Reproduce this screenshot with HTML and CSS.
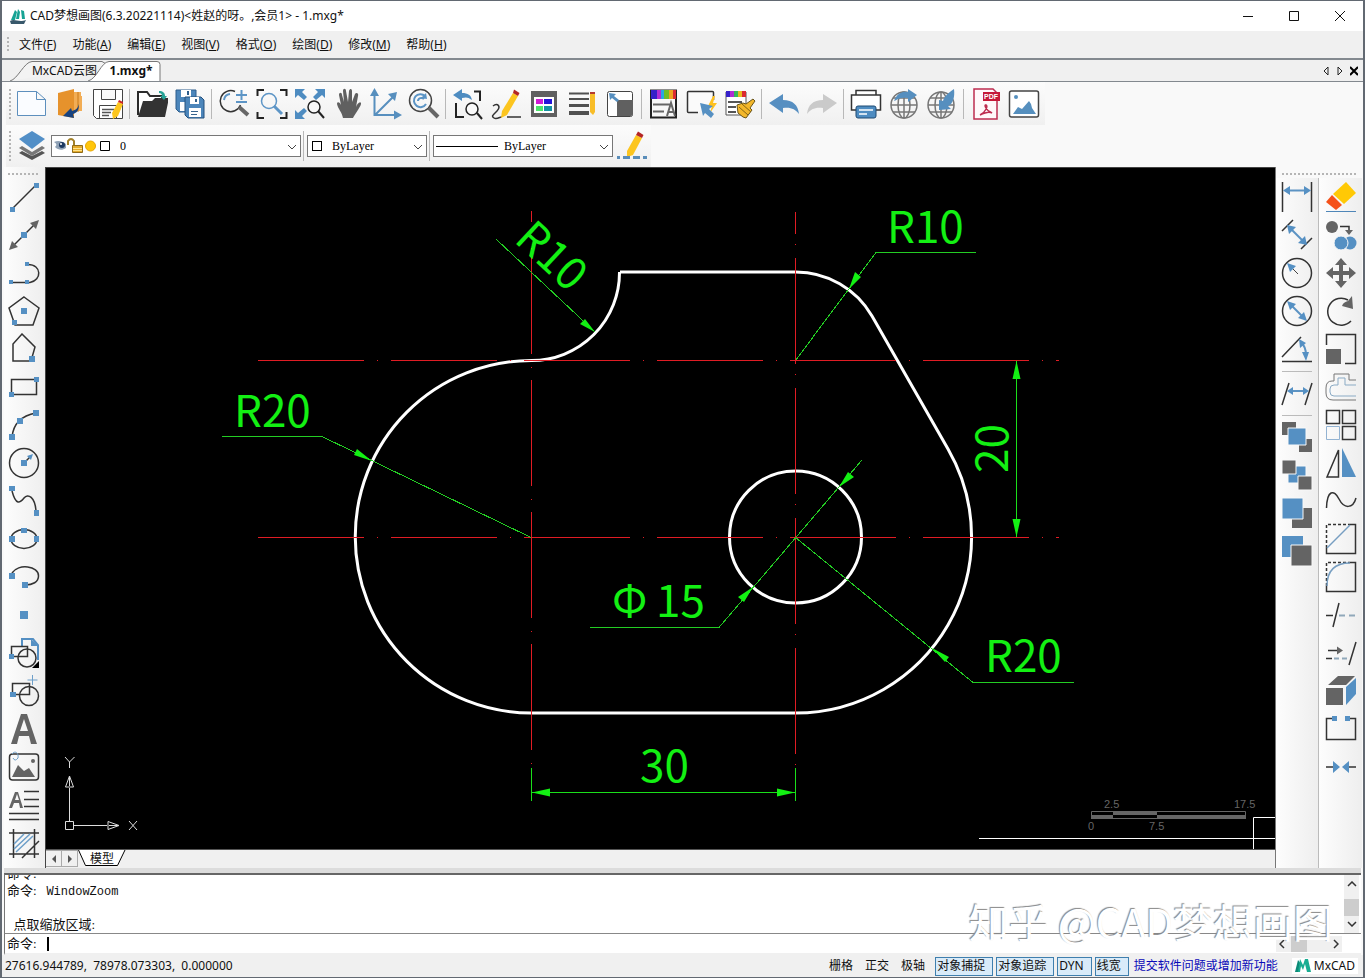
FILE: index.html
```html
<!DOCTYPE html>
<html lang="zh-CN">
<head>
<meta charset="utf-8">
<title>CAD梦想画图</title>
<link rel="stylesheet" href="styles.css">
</head>
<body>
<div class="window">
<header class="titlebar">
  <svg class="logo" viewBox="0 0 16 16"><path d="M5 2 1 12h4l2-8zM8 1 6 11h3l1-7zM11 2l1 9h3l-1-8z" fill="#16a394"/><path d="M0 13c5-3 8 2 16-1l-2 4H1z" fill="#38586b"/></svg>
  <h1>CAD梦想画图(6.3.20221114)&lt;姓赵的呀。,会员1&gt; - 1.mxg*</h1>
  <div class="winbtns">
    <button aria-label="最小化"><svg viewBox="0 0 12 12"><path d="M1 6.5h10"/></svg></button>
    <button aria-label="最大化"><svg viewBox="0 0 12 12"><path d="M1.5 1.5h9v9h-9z"/></svg></button>
    <button aria-label="关闭"><svg viewBox="0 0 12 12"><path d="m1 1 10 10M11 1 1 11"/></svg></button>
  </div>
</header>
<nav class="menubar">
  <i class="grip"></i>
  <button>文件(<u>F</u>)</button><button>功能(<u>A</u>)</button><button>编辑(<u>E</u>)</button><button>视图(<u>V</u>)</button><button>格式(<u>O</u>)</button><button>绘图(<u>D</u>)</button><button>修改(<u>M</u>)</button><button>帮助(<u>H</u>)</button>
</nav>
<div class="tabs">
  <button class="tab tab-cloud"><svg viewBox="0 0 98 20"><path d="M0 20C8 18 14 1 22 .5h70l5 3" fill="#f3f3f3" stroke="#777"/></svg><span>MxCAD云图</span></button>
  <button class="tab tab-file"><svg viewBox="0 0 74 20"><path d="M0 20C9 18 13 1 21 .5h48q3 0 3 3V20" fill="#fff" stroke="#777"/></svg><span>1.mxg*</span></button>
  <div class="tabnav">
    <button aria-label="上一个"><svg viewBox="0 0 8 10"><path d="M6 1v8L2 5z" fill="none" stroke="#222"/></svg></button>
    <button aria-label="下一个"><svg viewBox="0 0 8 10"><path d="M2 1v8l4-4z" fill="none" stroke="#222"/></svg></button>
    <button aria-label="关闭标签"><svg viewBox="0 0 8 10"><path d="m0 1 8 8M8 1 0 9" stroke="#000" stroke-width="2"/></svg></button>
  </div>
</div>

<div class="toolbar main-tools">
  <i class="grip"></i>
  <button aria-label="新建"><svg viewBox="0 0 32 32"><path d="M1.500 3.500h19l9 8v16h-28zM20.500 3.500v8h9" fill="#fafcff" stroke="#5d8fbd"/></svg></button>
  <button aria-label="打开图纸"><svg viewBox="0 0 32 32"><path d="M17 4h10v4h1v15h-8z" fill="#f2ad55"/><path d="M4 5 20 1v29L4 27z" fill="#e6922c"/><path d="M24 4v20" stroke="#c87818"/><path d="M25 16c-1 4-3 6-7 7l-1-3-8 8 11 2-1-4c4-1 6-4 6-10z" fill="#17427f"/></svg></button>
  <button aria-label="保存"><svg viewBox="0 0 32 32"><path d="M1.500 1.500h29v29h-26l-3-3zM9.500 1.500v10h14v-10M7.500 30V17.500h17V30" fill="#fff" stroke="#444"/><path d="M10 21.500h12M10 24.500h9M10 27.500h7" stroke="#555" stroke-width="1.500"/><path d="m26 14 5 2-5 12-5 3-1-6z" fill="#fdc61d"/><path d="m26 14 5 2v-2l-4-2z" fill="#c22"/></svg></button>
  <i class="sep"></i>
  <button aria-label="打开"><svg viewBox="0 0 32 32"><path d="M2 27V4h9l3 4h12v4" fill="#fff" stroke="#2b2b2b" stroke-width="2"/><path d="M7 13h9l3-3h14l-4 19H2z" fill="#333"/><path d="M23 3c4 0 6 2 6 5h2l-3 4-4-4h2c0-2-1-3-3-3z" fill="#25a396"/></svg></button>
  <button aria-label="全部保存"><svg viewBox="0 0 32 32"><path d="M2 2h20v22H5l-3-3z" fill="#4c86bb" stroke="#2c5d8c"/><path d="M7 2h10v7H7zM6 14h12v9H6z" fill="#fff"/><path d="M13 3h2v4h-2z" fill="#2c5d8c"/><path d="M11 9h16l3 3v18H14l-3-3z" fill="#4c86bb" stroke="#24507c"/><path d="M16 9h9v7h-9zM15 20h12v9H15z" fill="#fff"/><path d="M21 11h2v3h-2zM17 23h7v1h-7zM17 26h6v1h-6z" fill="#38648d"/></svg></button>
  <i class="sep"></i>
  <button aria-label="实时缩放"><svg viewBox="0 0 32 32" fill="none"><path d="M17 3.500A10.500 10.500 0 1 0 22.500 17" stroke="#333" stroke-width="1.500"/><path d="M6 12a7 7 0 0 1 6-6M18 7h11M23.500 2v10M18 14h11" stroke="#5d95c6" stroke-width="2"/><path d="m21 19 9 8" stroke="#666" stroke-width="4"/></svg></button>
  <button aria-label="窗口缩放"><svg viewBox="0 0 32 32" fill="none"><path d="M1.500 8V2H8M24 2h6.500v6M1.500 24v6H8M24 30h6.500v-6" stroke="#222" stroke-width="2"/><circle cx="13" cy="13" r="7.500" stroke="#5d95c6" stroke-width="1.500"/><path d="m18 18 8 8" stroke="#5d95c6" stroke-width="3"/></svg></button>
  <button aria-label="范围缩放"><svg viewBox="0 0 32 32"><g fill="#4e8cc1"><path d="M1 1h10L8 4l5 5-3 3-6-5-3 3zM31 1H21l3 3-5 5 3 3 6-5 3 3zM1 31h10l-3-3 5-5-3-3-6 5-3-3z"/></g><circle cx="20" cy="19" r="6" fill="#f8f8f8" stroke="#222" stroke-width="1.500"/><path d="m24 23 6 7" stroke="#222" stroke-width="2"/></svg></button>
  <button aria-label="平移"><svg viewBox="0 0 32 32"><path d="M11 30C10 24 6 21 5 16c0-3 3-2 4 1L7 7c0-3 3-3 3 0l2 7-1-11c0-3 3-3 3 0l2 11 1-11c1-3 3-2 3 0v11l3-8c1-2 4-1 3 2l-2 11c1-3 4-6 5-4s-6 11-8 15z" fill="#606060"/></svg></button>
  <button aria-label="坐标系"><svg viewBox="0 0 32 32"><path d="M4.500 5v22H27M5 27 24 8" fill="none" stroke="#578fbe" stroke-width="2"/><path d="M4.500 0 9 8H0zM32 27l-8-4.500v9zM27 4l-9 2 7 7z" fill="#578fbe"/></svg></button>
  <button aria-label="重生成"><svg viewBox="0 0 32 32" fill="none"><circle cx="12.500" cy="12.500" r="11" stroke="#444" stroke-width="1.500"/><path d="M17 8a6.500 6.500 0 1 0 1 8M10 13c0-3 4-4 6-2" stroke="#5b94c5" stroke-width="2"/><path d="m18 5 1 6-6-1z" fill="#5b94c5"/><path d="m21 20 9 9" stroke="#666" stroke-width="4"/></svg></button>
  <i class="sep"></i>
  <button aria-label="上一视图"><svg viewBox="0 0 32 32"><path d="m1 7 9-6v4c6 0 9 2 10 7-4-3-6-3-10-2v3z" fill="#4e8cc1"/><path d="M4 15v14h8M22 3.500h6V13" fill="none" stroke="#222" stroke-width="2"/><circle cx="20" cy="21" r="6" fill="#fafafa" stroke="#222" stroke-width="1.500"/><path d="m25 25 5 6" stroke="#222" stroke-width="2"/></svg></button>
  <button aria-label="绘图"><svg viewBox="0 0 32 32"><path d="M3 18c5-4 8 1 4 5s-6 5-3 7 7-2 8-1m5 0h14" fill="none" stroke="#333" stroke-width="1.500"/><path d="m23 5 5 3-11 19-6 3 1-7z" fill="#fcc51f"/><path d="m23 5 5 3 1.500-3-5.500-3.500z" fill="#b42525"/></svg></button>
  <button aria-label="特性"><svg viewBox="0 0 32 32"><path d="M3 3h26v26H3z" fill="#606060"/><path d="M6 9h20v16H6z" fill="#fff"/><path d="M8 11h7v5H8z" fill="#d01bd5"/><path d="M16 11h8v5h-8z" fill="#2414da"/><path d="M8 18h7v5H8z" fill="#4ce66b"/><path d="M16 18h8v5h-8z" fill="#1494a4"/></svg></button>
  <button aria-label="线宽"><svg viewBox="0 0 32 32"><path d="M3 5.500h20M3 11h20" fill="none" stroke="#505050" stroke-width="2"/><path d="M3 16h20v3H3zM3 23h20v4H3z" fill="#505050"/><path d="M24 6h5v18l-2 3-3-3z" fill="#f8bd28"/><path d="M24 4h5v2h-5z" fill="#b33a30"/></svg></button>
  <button aria-label="比例"><svg viewBox="0 0 32 32"><rect x="3.500" y="3.500" width="25" height="25" rx="2" fill="#fff" stroke="#444"/><path d="M13 12h16v14l-2 2H13z" fill="#606060"/><path d="m5 5 7 1-2 2 5 4-2 2-5-4-2 2z" fill="#568fc0"/></svg></button>
  <i class="sep"></i>
  <button aria-label="文字样式"><svg viewBox="0 0 32 32"><path d="M3 2.500h25v27H3z" fill="#f8f8f8" stroke="#222" stroke-width="2"/><path d="M3 2h6v9H3z" fill="#3620c9"/><path d="M9 2h4v9H9z" fill="#b22ed2"/><path d="M13 2h3v9h-3z" fill="#28a8df"/><path d="M16 2h5v9h-5z" fill="#6fbd25"/><path d="M21 2h4v9h-4z" fill="#eda21e"/><path d="M25 2h3v9h-3z" fill="#db2b31"/><path d="M5 16.500h18M5 23.500h11M19 28l4-13 4 13M20 24h6" fill="none" stroke="#666" stroke-width="2"/></svg></button>
  <button aria-label="快速选择"><svg viewBox="0 0 32 32"><path d="M12 24.500H2.500q-1 0-1-1v-19q0-1 1-1h24q1 0 1 1V12" fill="#fafafa" stroke="#333" stroke-width="1.500"/><path d="m27 8-5 10h4l-2 7 7-10h-4l2-7z" fill="#ffc11e"/><path d="m14 15 13 3-4 3 5 5-3 4-6-5-2 3z" fill="#5690c2"/></svg></button>
  <button aria-label="格式刷"><svg viewBox="0 0 32 32"><path d="M2 4h20v23H2z" fill="#fff" stroke="#555"/><path d="M2 3h4v6H2z" fill="#3620c9"/><path d="M6 3h4v6H6z" fill="#b22ed2"/><path d="M10 3h4v6h-4z" fill="#35b859"/><path d="M14 3h4v6h-4z" fill="#e8bd20"/><path d="M18 3h4v6h-4z" fill="#db2b31"/><path d="M4 14h14M4 19h8M4 24h8" stroke="#555" stroke-width="2"/><path d="m13 17 6-2 3 1 7-5 2 2-5 7 2 2-6 8-3-1-5-4z" fill="#f3b72b" stroke="#69551b"/><path d="m18 16 9 8M15 19l9 8" stroke="#856514"/></svg></button>
  <i class="sep"></i>
  <button aria-label="撤销"><svg viewBox="0 0 32 32"><path d="M1 15 15 6v6c10 0 15 5 16 14-4-5-8-7-16-6v5z" fill="#578fc1"/></svg></button>
  <button aria-label="重做"><svg viewBox="0 0 32 32"><path d="M31 15 17 6v6C7 12 2 17 1 26c4-5 8-7 16-6v5z" fill="#cacaca"/></svg></button>
  <i class="sep"></i>
  <button aria-label="打印"><svg viewBox="0 0 32 32"><path d="M6 7V2.500h20V7M6 22H1.500V7h29v15H26" fill="#fff" stroke="#333" stroke-width="1.500"/><rect x="6" y="18" width="20" height="12" rx="2" fill="#4e8cc1" stroke="#1f4a73"/><path d="M9 22h14M9 26h8" stroke="#fff" stroke-width="1.500"/></svg></button>
  <button aria-label="上传"><svg viewBox="0 0 32 32" fill="none"><g stroke="#777" stroke-width="1.500"><circle cx="16" cy="17" r="13"/><ellipse cx="16" cy="17" rx="6" ry="13"/><path d="M3 17h26M16 4v26M5 10h22M5 24h22"/></g><path d="M6 13C9 5 15 3 20 4V1l9 6-9 7v-4c-5-1-9 0-14 3z" fill="#568fbf"/></svg></button>
  <button aria-label="下载"><svg viewBox="0 0 32 32" fill="none"><g stroke="#777" stroke-width="1.500"><circle cx="15" cy="17" r="13"/><ellipse cx="15" cy="17" rx="6" ry="13"/><path d="M2 17h26M15 4v26M4 10h22M4 24h22"/></g><path d="M28 1C22 5 18 9 17 13l-4-1v10l12-1-3-3c5-2 7-9 6-17z" fill="#568fbf"/></svg></button>
  <i class="sep"></i>
  <button aria-label="导出 PDF"><svg viewBox="0 0 32 32"><path d="M4 1h19l4 4v26H4z" fill="#fff8fa" stroke="#bd2d50" stroke-width="1.500"/><path d="M13 4h17v9H13z" fill="#c51939"/><text x="14" y="11" class="pdf">PDF</text><path d="M10 27c6-3 8-9 6-10s-1 5 6 8c-3-2-8 0-12 2z" fill="none" stroke="#bd2d50" stroke-width="1.500"/></svg></button>
  <button aria-label="导出图片"><svg viewBox="0 0 32 32"><rect x="1.500" y="3" width="29" height="26" rx="2" fill="#fff" stroke="#444" stroke-width="1.500"/><path d="m5 26 5-7 4 2 7-8 2 3 1 4 4 6z" fill="#558fbe"/><circle cx="8" cy="9" r="2" fill="#558fbe"/></svg></button>
</div>

<div class="toolbar layer-tools">
  <i class="grip"></i>
  <button aria-label="图层"><svg viewBox="0 0 32 32"><path d="m3 23 13 7 13-7-3-2-10 5-10-5z" fill="#555"/><path d="m3 18 13 8 13-8-3-2-10 6-10-6z" fill="#777"/><path d="M16 1 29 9 16 19 3 9z" fill="#528fc7"/></svg></button>
  <div class="combo c-layer">
    <span class="combo-icons">
      <svg viewBox="0 0 60 16"><path d="M0 4c4-2 8-1 12 2v4c-4 3-8 2-11-1 2-2 2-3-1-5z" fill="#8fa1b5"/><circle cx="8" cy="7" r="3" fill="#1d3a62"/><circle cx="7" cy="6" r="1" fill="#fff"/><path d="M14 7V3q3-4 6 0v5" fill="none" stroke="#a38129" stroke-width="2"/><path d="M18.500 7.500h10v7h-10z" fill="#e5ac2c" stroke="#8f6b18"/><path d="M19 10.500h9M19 12.500h9" stroke="#ffe38b"/><circle cx="36.500" cy="8" r="5" fill="#ffc60b" stroke="#e8a600"/><path d="M46.500 3.500h9v9h-9z" fill="#fff" stroke="#000"/></svg>
    </span>
    <select aria-label="当前图层"><option>0</option></select>
    <svg class="chev" viewBox="0 0 10 6"><path d="m1 1 4 4 4-4"/></svg>
  </div>
  <i class="sep"></i>
  <div class="combo c-color">
    <span class="combo-icons"><b></b></span>
    <select aria-label="颜色"><option>ByLayer</option></select>
    <svg class="chev" viewBox="0 0 10 6"><path d="m1 1 4 4 4-4"/></svg>
  </div>
  <i class="sep"></i>
  <div class="combo c-line">
    <span class="combo-icons"><em></em></span>
    <select aria-label="线型"><option>ByLayer</option></select>
    <svg class="chev" viewBox="0 0 10 6"><path d="m1 1 4 4 4-4"/></svg>
  </div>
  <button aria-label="线型管理"><svg viewBox="0 0 32 32"><path d="m20 5 6 3-9 17-6 2 0-6z" fill="#fcc51f"/><path d="m20 5 6 3 1.500-3L22 1.500z" fill="#b42525"/><path d="M1 27.500h3m3 0h7m3 0h7m3 0h4" stroke="#5a8db9" stroke-width="3"/></svg></button>
</div>

<main class="workspace">
  <aside class="rail rail-left">
    <i class="grip-h"></i>
    <button aria-label="直线"><svg viewBox="0 0 32 32"><path d="M4 28 28 4" class="k"/><path d="M2 26h5v5H2zM26 2h5v5h-5z" class="b"/></svg></button>
    <button aria-label="构造线"><svg viewBox="0 0 32 32"><path d="M4 28 28 4" class="k"/><path d="m31 1-9 3 6 6zM1 31l9-3-6-6z" class="g"/><path d="M13 13h6v6h-6z" class="b"/></svg></button>
    <button aria-label="多段线"><svg viewBox="0 0 32 32"><path d="M3 25.500h19c12-2 12-18-2-18" class="k"/><path d="M1 23h4v4H1zM17 23h4v4h-4zM17 5h4v4h-4z" class="b"/></svg></button>
    <button aria-label="正多边形"><svg viewBox="0 0 32 32"><path d="m16 2 15 11-6 17H7L1 13z" class="k"/><path d="M13 13h6v6h-6zM4 25h5v5H4z" class="b"/></svg></button>
    <button aria-label="多边形"><svg viewBox="0 0 32 32"><path d="m14 1 13 13-4 14H5V11z" class="k"/><path d="M21 23h6v6h-6z" class="b"/></svg></button>
    <button aria-label="矩形"><svg viewBox="0 0 32 32"><path d="M3.500 8.500h25v15h-25z" class="k"/><path d="M26 6h5v5h-5zM1 21h5v5H1z" class="b"/></svg></button>
    <button aria-label="圆弧"><svg viewBox="0 0 32 32"><path d="M4 28Q6 8 28 4" class="k"/><path d="M1 25h6v6H1zM9 9h6v6H9zM25 1h6v6h-6z" class="b"/></svg></button>
    <button aria-label="圆"><svg viewBox="0 0 32 32"><circle cx="16" cy="16" r="14.500" class="k"/><path d="m16 16 7-7" class="k"/><path d="M13 13h6v6h-6zM25 7l-6 2 4 4z" class="b"/></svg></button>
    <button aria-label="样条曲线"><svg viewBox="0 0 32 32"><path d="M4 6C8 21 12 18 16 13s11-1 12 13" class="k"/><path d="M1 1h6v5H1zM26 25h5v6h-5z" class="b"/></svg></button>
    <button aria-label="椭圆"><svg viewBox="0 0 32 32"><ellipse cx="16" cy="16" rx="13" ry="9.500" class="k"/><path d="M1 13h6v6H1zM13 5h6v5h-6zM26 13h5v6h-5z" class="b"/></svg></button>
    <button aria-label="椭圆弧"><svg viewBox="0 0 32 32"><path d="M4 12C10 2 31 5 30.500 15c0 6-6 9-13 9" class="k"/><path d="M1 12h6v6H1zM14 21h6v6h-6z" class="b"/></svg></button>
    <button aria-label="点"><svg viewBox="0 0 32 32"><path d="M12 12h8v8h-8z" class="b"/></svg></button>
    <button aria-label="创建块"><svg viewBox="0 0 32 32"><path d="M14 10V2h11l5 6v15" fill="none" stroke="#548fc3" stroke-width="2"/><path d="M23 2v7h8z" class="b"/><path d="M3.500 9.500h16v10h-16z" class="k"/><circle cx="19" cy="21" r="9" class="k"/><path d="M1 17h5v5H1z" class="b"/><path d="M31 24v7h-7z"/></svg></button>
    <button aria-label="插入块"><svg viewBox="0 0 32 32"><path d="M4.500 8.500h17v11h-17z" class="k"/><circle cx="21" cy="21" r="9.500" class="k"/><path d="M2 17h6v5H2z" class="b"/><path d="M24.500 0v10m-5-5h10" stroke="#6d9fc9"/></svg></button>
    <button aria-label="单行文字"><svg viewBox="0 0 32 32"><path d="M3 31 13 1h6l10 30h-6l-2-8H11l-2 8zM12 18h8L16 6z" class="g"/></svg></button>
    <button aria-label="图像"><svg viewBox="0 0 32 32"><rect x="1.500" y="3" width="29" height="26" rx="3" class="k"/><path d="m4 26 6-12 6 6 5-3 6 9z" class="g"/><circle cx="25" cy="10" r="2" class="g"/><path d="M4 3c3-4 7-1 6 4q-3 4-5 0" fill="none" stroke="#6d9fc9"/></svg></button>
    <button aria-label="多行文字"><svg viewBox="0 0 32 32"><path d="m1 19 6-16h3l5 16h-3l-1-5H6l-2 5zM7 11h4L9 5z" class="g"/><path d="M16 2.500h15M16 10.500h15M16 17.500h15M1 24.500h30M1 30.500h30" class="k"/></svg></button>
    <button aria-label="填充"><svg viewBox="0 0 32 32"><path d="M1 6h30M1 27h30M5.500 2v29M26.500 2v29M14 31 31 14" class="k"/><path d="m6 17 10-10M6 22 22 7M8 25 25 9" fill="none" stroke="#6d9fc9" stroke-width="1.500"/></svg></button>
  </aside>

  <section class="document">
    <svg class="drawing" viewBox="46 168 1229 681" preserveAspectRatio="xMinYMin slice">
      <g fill="none" stroke="#fff" stroke-width="3">
        <path d="M620 272H795.500A88 88 0 0 1 872 316L948 449A176 176 0 0 1 795.500 713H531.500A176.250 176.250 0 0 1 531.500 360.500A88 88 0 0 0 619.500 272"/>
        <circle cx="795.500" cy="537" r="66"/>
      </g>
      <g fill="none" stroke="#e01c24" stroke-dasharray="106 13 1 13">
        <path d="M258 360.500H1059"/><path d="M258 537.500H1059"/>
        <path d="M531.500 211V768" stroke-dasharray="106 13 1 12" stroke-dashoffset="95"/>
        <path d="M795.500 212V768" stroke-dasharray="106 10 1 13" stroke-dashoffset="84"/>
      </g>
      <g fill="none" stroke="#23cc23">
        <path d="M222 436.500h100l209 101M496.500 239.500 595 332M795.500 360.500 876 252.500h100M862 460 719 627.500H590M795.500 537.500 973 682.500h101" shape-rendering="crispEdges"/>
        <path d="M1016.500 361V537M531 792.500h264M531.500 768v33M795.500 768v33" stroke="#1adf1a"/>
      </g>
      <g fill="#13f013">
        <path d="m372 461-18-6 3-6zM595 332l-15-8 5-5zM849 289l6-17 6 5zM839 487l9-15 6 5zM753 587l-9 15-6-5zM932 648l17 9-4 5zM1016.500 361l4 18h-8zM1016.500 537l4-18h-8zM532 792.500l18-4v8zM795 792.500l-18-4v8z"/>
      </g>
      <g class="dim">
        <text x="234" y="427">R20</text><text x="887" y="243">R10</text><text x="985" y="672">R20</text><text x="640" y="782">30</text>
        <text x="612" y="617">Φ</text><text x="656" y="617">15</text>
        <text transform="translate(1008 473) rotate(-90)">20</text>
        <text transform="translate(513 241) rotate(43)">R10</text>
      </g>
      <g fill="none" stroke="#ddd">
        <path d="M65.500 821.500h8v8h-8zM69.500 821v-33M74 825.500h33M69.500 776l-4 11h8zM119 825.500l-11-4v8zM109 825.500h9M69.500 786v-9M65 757l4.500 5 5-5M69.500 762v6M129 821l8 9M137 821l-8 9"/>
        <path d="M979 838.500h296M1253.500 849v-31.500H1275" stroke="#fff"/>
      </g>
      <path d="M1091.500 811.500h154v7h-154z" fill="#000" stroke="#666"/><path d="M1091 815h22v4h-22zM1113 811h44v4h-44zM1157 815h89v4h-89z" fill="#666"/>
      <g class="scale"><text x="1104" y="808">2.5</text><text x="1234" y="808">17.5</text><text x="1088" y="830">0</text><text x="1149" y="830">7.5</text></g>
    </svg>
    <div class="modelbar">
      <button aria-label="向左"><svg viewBox="0 0 8 10"><path d="M6 1v8L2 5z" fill="#555"/></svg></button>
      <button aria-label="向右"><svg viewBox="0 0 8 10"><path d="M2 1v8l4-4z" fill="#555"/></svg></button>
      <button class="model"><svg viewBox="0 0 48 17"><path d="m.500 0 7 15.500h32L47 0" fill="#fff" stroke="#000"/></svg><span>模型</span></button>
    </div>
  </section>

  <aside class="rights">
    <i class="grip-h"></i>
    <div class="rail rail-dim">
      <button aria-label="线性标注"><svg viewBox="0 0 32 32"><path d="M1.500 1v30M30.500 1v30" class="k"/><path d="M5 9.500h22" stroke="#5c93c3" stroke-width="2"/><path d="m2 9.500 7-4.500v9zM30 9.500 23 5v9z" class="b"/></svg></button>
      <button aria-label="对齐标注"><svg viewBox="0 0 32 32"><path d="M1 12 12 1M20 30l11-11" class="k"/><path d="m9 9 14 14" stroke="#5c93c3" stroke-width="2"/><path d="m6 6 9 2-7 7zM26 26l-2-9-7 7z" class="b"/></svg></button>
      <button aria-label="半径标注"><svg viewBox="0 0 32 32"><circle cx="16" cy="16" r="14.500" class="k"/><path d="m9 9 8 8" stroke="#444"/><path d="m6 6 9 3-6 6z" class="b"/></svg></button>
      <button aria-label="直径标注"><svg viewBox="0 0 32 32"><circle cx="16" cy="16" r="14.500" class="k"/><path d="m9 9 14 14" stroke="#5c93c3" stroke-width="2"/><path d="m6 6 9 3-6 6zM26 26l-3-9-6 6z" class="b"/></svg></button>
      <button aria-label="角度标注"><svg viewBox="0 0 32 32"><path d="M1 28.500h30M1 24 20 4" class="k"/><path d="M20 9q5 5 5 13" fill="none" stroke="#5c93c3" stroke-width="2"/><path d="m18 6 7 4-6 5zM25 28l-4-9h7z" class="b"/></svg></button>
      <i class="sep-h"></i>
      <button aria-label="编辑标注"><svg viewBox="0 0 32 32"><path d="M1 28 8 6M24 28l7-22" class="k"/><path d="M8 14h18" stroke="#5c93c3" stroke-width="2"/><path d="m6 14 6-4v8zM28 14l-6-4v8z" class="b"/></svg></button>
      <i class="sep-h"></i>
      <button aria-label="前置"><svg viewBox="0 0 32 32"><path d="M1 1h14v13H1zM18 18h13v13H18z" class="g"/><path d="M7 7h18v17H7z" class="bw"/></svg></button>
      <button aria-label="后置"><svg viewBox="0 0 32 32"><path d="M7 7h18v17H7z" class="bw"/><path d="M1 1h14v14H1zM17 17h14v14H17z" class="gw"/></svg></button>
      <button aria-label="置于最前"><svg viewBox="0 0 32 32"><path d="M11 11h20v20H11z" class="g"/><path d="M1 1h21v21H1z" class="bw"/></svg></button>
      <button aria-label="置于最后"><svg viewBox="0 0 32 32"><path d="M1 1h21v21H1z" class="b"/><path d="M10 10h21v21H10z" class="gw"/></svg></button>
    </div>
    <div class="rail rail-edit">
      <button aria-label="删除"><svg viewBox="0 0 32 32"><path d="m21 1 10 11-12 11L8 13z" fill="#ffc905"/><path d="m7 14 10 10-6 5-10-8z" fill="#f55119"/><path d="M1 30.500h30" stroke="#4f86b8"/></svg></button>
      <button aria-label="复制"><svg viewBox="0 0 32 32"><circle cx="7" cy="8" r="6" class="g"/><path d="M15 7.500h9V13" class="k"/><path d="M20 11h8l-4 5z" class="g"/><circle cx="25" cy="24" r="6.500" class="b"/><circle cx="16" cy="24" r="7" class="bw"/></svg></button>
      <button aria-label="移动"><svg viewBox="0 0 32 32"><path d="m16 1 6 7h-4v6h6v-4l7 6-7 6v-4h-6v6h4l-6 7-6-7h4v-6H8v4l-7-6 7-6v4h6V8h-4z" class="g"/></svg></button>
      <button aria-label="旋转"><svg viewBox="0 0 32 32"><path d="M23 5A13.500 13.500 0 1 0 26 26" class="k"/><path d="m27 1 1 13-11-3c1-3 3-4 6-5z" class="g"/></svg></button>
      <button aria-label="缩放"><svg viewBox="0 0 32 32"><path d="M1.500 12V1.500h29v29H20" class="k"/><path d="M1 16h15v15H1z" class="g"/></svg></button>
      <button aria-label="偏移"><svg viewBox="0 0 32 32"><g fill="none" stroke="#777"><path d="M31 9h-7V3H9v7H7q-6 0-6 7v5q0 7 7 7h23"/><path d="M31 14H20V7h-7v7H9q-4 0-4 4v3q0 4 4 4h22" stroke="#8babc5"/></g></svg></button>
      <button aria-label="阵列"><svg viewBox="0 0 32 32"><path d="M1.500 1.500h13v13h-13zM17.500 1.500h13v13h-13zM17.500 17.500h13v13h-13z" class="k"/><path d="M1.500 17.500h13v13h-13z" fill="none" stroke="#93b3d2"/></svg></button>
      <button aria-label="镜像"><svg viewBox="0 0 32 32"><path d="M13.500 3v27H2z" class="k"/><path d="m17 1 14 29H17z" class="b"/></svg></button>
      <button aria-label="编辑曲线"><svg viewBox="0 0 32 32"><path d="M1.500 23C2 5 9 4 14 14s14 10 17-1" class="k"/></svg></button>
      <button aria-label="倒角"><svg viewBox="0 0 32 32"><path d="M25 1.500h5.500v29h-29V25" class="k"/><path d="M1.500 25V1.500H25" class="k" stroke-dasharray="3 2"/><path d="M2 25 25 2" stroke="#779ec1" stroke-width="1.500"/></svg></button>
      <button aria-label="圆角"><svg viewBox="0 0 32 32"><path d="M25 1.500h5.500v29h-29V25" class="k"/><path d="M1.500 25V1.500H25" class="k" stroke-dasharray="3 2"/><path d="M2 25Q2 2 25 2" fill="none" stroke="#779ec1" stroke-width="1.500"/></svg></button>
      <button aria-label="修剪"><svg viewBox="0 0 32 32"><path d="m8 28 6-24M1 16.500h7" class="k"/><path d="M14 16.500h17" stroke="#90a8ba" stroke-width="2" stroke-dasharray="6 4"/></svg></button>
      <button aria-label="延伸"><svg viewBox="0 0 32 32"><path d="m24 28 7-23M1 21.500h6M3 13.500h10" class="k"/><path d="m18 13.500-6-4v8z" class="g"/><path d="M9 21.500h13" stroke="#90a8ba" stroke-width="2" stroke-dasharray="5 3"/></svg></button>
      <button aria-label="分解"><svg viewBox="0 0 32 32"><path d="M1 13h17v17H1zM3 10 13 1h17l-9 9z" class="g"/><path d="m21 12 10-9v16l-10 11z" class="b"/></svg></button>
      <button aria-label="打断"><svg viewBox="0 0 32 32"><path d="M8 5.500H1.500v21h29v-21H24" class="k"/><path d="M7 3h5v5H7zM20 3h5v5h-5z" class="b"/></svg></button>
      <button aria-label="合并"><svg viewBox="0 0 32 32"><path d="M1 16h8M23 16h8" class="k"/><path d="m15 16-7-6v12zM17 16l7-6v12z" class="b"/></svg></button>
    </div>
  </aside>
</main>

<section class="command">
  <div class="history">
    <div class="lines"><p>命令:</p><p>命令:&nbsp;&nbsp; <span class="code">WindowZoom</span></p><p></p><p>&nbsp; 点取缩放区域:</p></div>
    <div class="vscroll"><svg viewBox="0 0 10 6"><path d="m1 5 4-4 4 4"/></svg><i></i><svg viewBox="0 0 10 6"><path d="m1 1 4 4 4-4"/></svg></div>
  </div>
  <div class="prompt">
    <label for="cmd">命令:</label><i class="caret"></i><input id="cmd" type="text">
    <div class="hscroll"><svg viewBox="0 0 6 10"><path d="M5 1 1 5l4 4"/></svg><i></i><svg viewBox="0 0 6 10"><path d="m1 1 4 4-4 4"/></svg></div>
  </div>
  <div class="watermark">知乎 @CAD梦想画图</div>
</section>
<footer class="status">
  <output>27616.944789,&nbsp; 78978.073303,&nbsp; 0.000000</output>
  <button>栅格</button><button>正交</button><button>极轴</button>
  <div class="toggles"><button>对象捕捉</button><button>对象追踪</button><button>DYN</button><button>线宽</button></div>
  <a href="#feedback">提交软件问题或增加新功能</a>
  <div class="brand"><svg viewBox="0 0 16 16"><path d="M3 2 0 14h4l2-8z" fill="#0c8b78"/><path d="m5 1 3 6 2-6h3l3 13h-4L10 6 8 12 6 8l-1 6H3z" fill="#19ad92"/></svg><span>MxCAD</span></div>
</footer>
</div>
</body>
</html>
```
FILE: styles.css
```css
* { box-sizing: border-box; }
body { margin: 0; font: 12px/16px "Noto Sans", "Noto Sans CJK SC", sans-serif; color: #111; }
button { border: 0; padding: 0; margin: 0; background: none; font: inherit; color: inherit; display: flex; align-items: center; justify-content: center; flex: none; }
svg { display: block; flex: none; }
p, h1 { margin: 0; font: inherit; }
.window { height: 100vh; display: flex; flex-direction: column; border: solid #626972; border-width: 1px 2px 1px 2px; background: #f9f9f9; overflow: hidden; }
.menubar, .tabs, .status { background: #f0f0f0; }

.titlebar { height: 30px; flex: none; background: #fff; display: flex; align-items: center; padding-left: 8px; gap: 4px; }
.logo { width: 16px; height: 16px; }
.titlebar h1 { flex: 1; }
.winbtns { display: flex; }
.winbtns button { width: 46px; height: 28px; }
.winbtns svg { width: 12px; height: 12px; fill: none; stroke: #111; }

.menubar { height: 27px; flex: none; display: flex; align-items: center; gap: 16px; padding-left: 5px; }
.menubar .grip { height: 15px; margin-right: -6px; }
.grip { width: 2px; height: 30px; flex: none; background: repeating-linear-gradient(#b5b5b5 0 2px, transparent 2px 4px); }
.grip-h { height: 2px; flex: none; background: repeating-linear-gradient(90deg, #b5b5b5 0 2px, transparent 2px 4px); }

.tabs { height: 24px; flex: none; display: flex; align-items: flex-end; border-top: 2px solid #83898f; border-bottom: 1px solid #83898f; padding-left: 8px; }
.tab { position: relative; height: 20px; }
.tab svg { position: absolute; inset: 0; width: 100%; height: 100%; }
.tab span { position: relative; }
.tab-cloud { width: 98px; padding-left: 11px; }
.tab-file { width: 74px; margin-left: -20px; padding-left: 12px; font-weight: bold; }
.tabnav { display: flex; align-items: center; gap: 6px; margin-left: auto; padding-right: 5px; height: 20px; }
.tabnav svg { width: 8px; height: 10px; }

.toolbar { flex: none; display: flex; align-items: center; align-self: flex-start; margin-left: 4px; padding-left: 3px; background: linear-gradient(#fcfcfc, #f0f0f0); }
.main-tools { height: 43px; padding-right: 2px; }
.layer-tools { height: 42px; }
.toolbar button { width: 38px; height: 38px; }
.toolbar > .grip + button { margin-left: 2px; }
.toolbar button svg, .rail button svg { width: 32px; height: 32px; }
.sep { width: 1px; height: 30px; flex: none; background: #b8b8b8; margin: 0 3px 0 2px; }
.pdf { font: bold 7px "Liberation Sans", sans-serif; fill: #fff; }
.combo { position: relative; height: 22px; border: 1px solid #777; background: #fff; }
.combo select { appearance: none; width: 100%; height: 100%; border: 0; background: transparent; padding: 0 20px 0 24px; font: 12px "Liberation Serif", serif; color: #000; }
.c-layer { width: 250px; }
.c-layer select { padding-left: 68px; }
.c-color { width: 120px; }
.c-line { width: 180px; }
.c-line select { padding-left: 70px; }
.combo-icons { position: absolute; left: 2px; top: 2px; height: 16px; display: flex; align-items: center; pointer-events: none; }
.combo-icons svg { width: 60px; height: 16px; }
.combo-icons b { width: 10px; height: 10px; border: 1px solid #000; background: #fff; margin-left: 2px; }
.combo-icons em { width: 62px; height: 1px; background: #000; }
.combo .chev { position: absolute; right: 3px; top: 8px; width: 10px; height: 6px; fill: none; stroke: #444; }

.workspace { flex: 1; min-height: 0; display: flex; }
.rail { display: flex; flex-direction: column; align-items: center; background: linear-gradient(90deg, #fdfdfd, #eeeeee); }
.rail button { width: 38px; height: 38px; }
.rail-left { width: 41px; margin-left: 2px; padding: 6px 1px 0 0; }
.grip-h { align-self: stretch; margin: 0 6px 3px 4px; }
.k { fill: none; stroke: #333; stroke-width: 1.500; }
.b { fill: #5590c3; }
.g { fill: #646464; }
.bw { fill: #5590c3; stroke: #f8f8f8; }
.gw { fill: #646464; stroke: #f8f8f8; }
.document { flex: 1; min-width: 0; display: flex; flex-direction: column; background: #f0f0f0; border: solid #444; border-width: 1px 0 0 1px; }
.drawing { width: 100%; flex: 1; min-height: 0; background: #000; }
.dim { font: 44px "Noto Sans CJK SC", sans-serif; fill: #13f013; }
.scale { font: 11px "Liberation Sans", sans-serif; fill: #666; }
.modelbar { height: 19px; flex: none; display: flex; border-top: 1px solid #555; }
.modelbar button { width: 16px; height: 17px; border: 1px solid #aaa; border-left: 0; }
.modelbar svg { width: 8px; height: 10px; }
.modelbar .model { position: relative; width: 48px; border: 0; }
.modelbar .model svg { position: absolute; inset: 0; width: 48px; height: 17px; }
.model span { position: relative; }
.rights { flex: none; width: 88px; display: grid; grid-template-columns: 42px 44px; grid-template-rows: auto 1fr; padding: 6px 1px 0 0; border-left: 1px solid #777; }
.rights .grip-h { grid-column: 1 / 3; margin: 0 6px 3px 6px; }
.rail-edit { border-left: 1px solid #bbb; }
.sep-h { width: 30px; height: 1px; background: #bbb; margin: 3px 0 2px; flex: none; }

.command { flex: none; height: 87px; display: flex; flex-direction: column; position: relative; margin: 0 2px; border-top: 5px solid #dcdcdc; background: #fff; font: 13px/17px "Liberation Serif", "Noto Sans CJK SC", serif; }
.history { height: 61px; display: flex; border-top: 2px solid #666; border-bottom: 1px solid #888; border-left: 1px solid #777; overflow: hidden; }
.lines { flex: 1; padding-left: 2px; display: flex; flex-direction: column; justify-content: flex-end; min-height: 0; }
.lines p { height: 17px; flex: none; }
.code { font: 12px/16px "Liberation Mono", monospace; }
.vscroll { width: 15px; background: #f0f0f0; display: flex; flex-direction: column; align-items: center; padding: 6px 0; margin-right: 2px; }
.vscroll svg { width: 10px; height: 6px; fill: none; stroke: #333; stroke-width: 1.500; }
.vscroll i { width: 15px; height: 17px; background: #cdcdcd; margin: auto 0 5px; }
.prompt { flex: 1; display: flex; align-items: center; padding-left: 2px; border-left: 1px solid #777; border-bottom: 2px solid #f0f0f0; }
.caret { width: 2px; height: 14px; background: #000; margin-left: 10px; }
.prompt input { flex: 1; min-width: 0; border: 0; padding: 0; font: inherit; }
.hscroll { width: 66px; height: 16px; margin-right: 19px; background: #f0f0f0; display: flex; align-items: center; padding: 0 3px; }
.hscroll svg { width: 6px; height: 10px; fill: none; stroke: #333; stroke-width: 1.500; }
.hscroll i { width: 16px; height: 16px; background: #cdcdcd; margin: 0 auto 0 6px; }
.watermark { position: absolute; right: 28px; top: 24px; font: 40px/48px "Noto Sans CJK SC", sans-serif; color: #fff; text-shadow: -1px -1px 1px #888; pointer-events: none; }

.status { flex: none; height: 22px; display: flex; align-items: center; padding: 0 5px 0 3px; }
.status output { flex: 1; }
.status > button { margin-right: 12px; }
.status > button:nth-of-type(3) { margin-right: 10px; }
.toggles { display: flex; gap: 3px; margin-right: 5px; }
.toggles button { height: 19px; padding: 0 7px 0 1px; background: #d9ebf9; border: 1px solid #3f7fae; }
.status a { color: #0a0ab8; text-decoration: none; margin-right: 14px; }
.brand { display: flex; align-items: center; gap: 3px; background: #fff; padding: 0 3px; }
.brand svg { width: 16px; height: 16px; }
```
